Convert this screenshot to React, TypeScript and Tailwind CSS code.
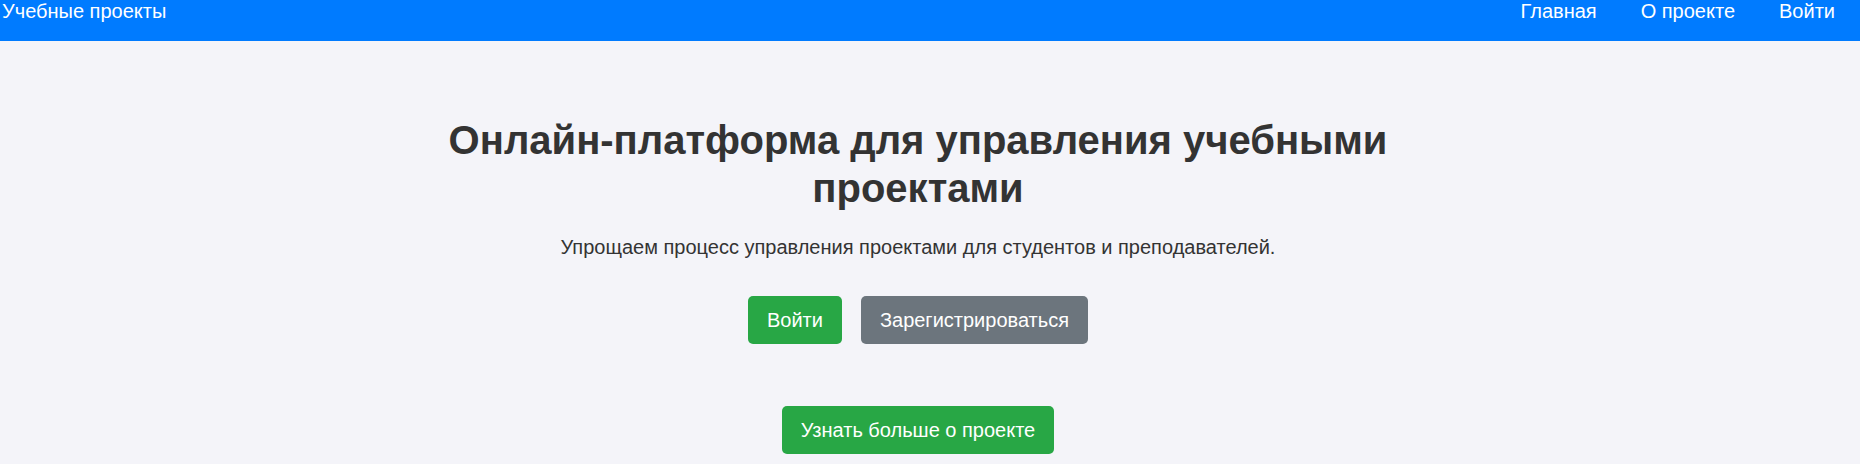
import React from "react";

export default function App() {
  return (
    <div className="min-h-[464px] bg-[#f4f4f9] text-[#333] font-['Liberation_Sans',Arial,sans-serif]">
      <header className="h-[41px] bg-[#007bff] text-white flex items-start justify-between pl-[2px] pr-[25px]">
        <div className="text-[20px] leading-[23px]">Учебные проекты</div>
        <nav className="flex gap-[44px] text-[20px] leading-[23px]">
          <a href="#" className="text-white">Главная</a>
          <a href="#" className="text-white">О проекте</a>
          <a href="#" className="text-white">Войти</a>
        </nav>
      </header>
      <main className="pr-[24px] pt-[75px] flex flex-col items-center text-center">
        <h1 className="w-[1000px] text-[40px] leading-[48px] font-bold text-[#333]">
          Онлайн-платформа для управления учебными проектами
        </h1>
        <p className="mt-[24px] text-[20px] leading-[23px] text-[#333]">
          Упрощаем процесс управления проектами для студентов и преподавателей.
        </p>
        <div className="mt-[37px] flex gap-[19px]">
          <button className="h-[48px] px-[19px] rounded-[5px] bg-[#28a745] text-white text-[20px]">Войти</button>
          <button className="h-[48px] px-[19px] rounded-[5px] bg-[#6c757d] text-white text-[20px]">Зарегистрироваться</button>
        </div>
        <button className="mt-[62px] h-[48px] px-[19px] rounded-[5px] bg-[#28a745] text-white text-[20px]">Узнать больше о проекте</button>
      </main>
    </div>
  );
}
